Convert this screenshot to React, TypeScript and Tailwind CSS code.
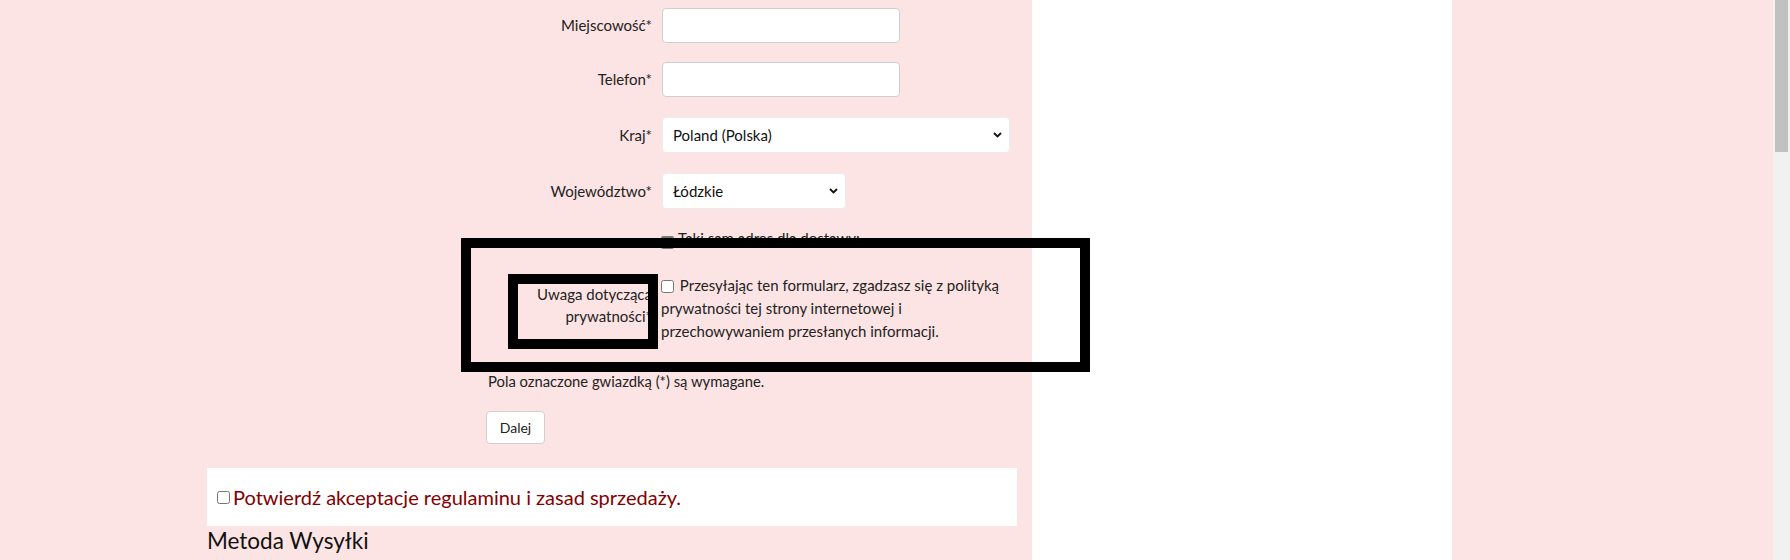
import React from "react";

function Row({ label, children, className }: { label: string; children: React.ReactNode; className: string }) {
  return (
    <div className={"flex items-center " + className}>
      <label className="w-[164px] shrink-0 text-right text-[15px] text-[#222]">{label}</label>
      <div className="ml-[10px] flex-1">{children}</div>
    </div>
  );
}

function Chevron() {
  return (
    <svg className="pointer-events-none absolute right-[8px] top-1/2 -translate-y-1/2" width="9" height="6" viewBox="0 0 9 6">
      <polyline points="1,1 4.5,4.5 8,1" fill="none" stroke="#111" strokeWidth="1.8" />
    </svg>
  );
}

export default function App() {
  return (
    <div className="flex h-[560px] w-[1790px] overflow-hidden font-['Lato',sans-serif] text-[#222]">
      <div className="relative w-[1032px] shrink-0 bg-[#fde4e4]">
        <div className="ml-[207px] w-[810px] pt-[8px]">
          <div className="ml-[281px]">
            <Row label="Miejscowość*" className="h-[35px]">
              <input className="h-[35px] w-[238px] rounded-[4px] border border-[#cfcfcf] bg-white" />
            </Row>
            <Row label="Telefon*" className="mt-[19px] h-[35px]">
              <input className="h-[35px] w-[238px] rounded-[4px] border border-[#cfcfcf] bg-white" />
            </Row>
            <Row label="Kraj*" className="mt-[20px] h-[36px]">
              <div className="relative w-[348px]">
                <select className="h-[36px] w-full appearance-none rounded-[4px] border border-[#ececec] bg-white pl-[10px] text-[15px] text-[#111] outline-none" defaultValue="pl">
                  <option value="pl">Poland (Polska)</option>
                </select>
                <Chevron />
              </div>
            </Row>
            <Row label="Województwo*" className="mt-[20px] h-[36px]">
              <div className="relative w-[184px]">
                <select className="h-[36px] w-full appearance-none rounded-[4px] border border-[#ececec] bg-white pl-[10px] text-[15px] text-[#111] outline-none" defaultValue="ld">
                  <option value="ld">Łódzkie</option>
                </select>
                <Chevron />
              </div>
            </Row>
            <div className="mt-[18px] flex text-[15px] leading-[22.5px]">
              <div className="w-[164px] shrink-0" />
              <div className="ml-[9px] flex-1">
                <span className="mr-[4px] inline-flex h-[13px] w-[13px] translate-y-[2px] items-center justify-center rounded-[2px] bg-[#7a7a7a] align-baseline">
                  <svg width="9" height="8" viewBox="0 0 9 8">
                    <polyline points="1,4 3.5,6.5 8,1" fill="none" stroke="#fff" strokeWidth="1.8" />
                  </svg>
                </span>
                Taki sam adres dla dostawy:
              </div>
            </div>
            <div className="mt-[24px] flex">
              <label className="w-[164px] shrink-0 pt-[9px] text-right text-[15px] leading-[22px] text-[#222]">
                Uwaga dotycząca prywatności*
              </label>
              <div className="ml-[9px] w-[356px] text-[15px] leading-[23px] text-[#222]">
                <input type="checkbox" className="m-0 mr-[2px] h-[13px] w-[13px] align-[-2px]" /> Przesyłając ten formularz, zgadzasz się z polityką prywatności tej strony internetowej i przechowywaniem przesłanych informacji.
              </div>
            </div>
            <p className="mt-[28px] text-[14.8px] leading-[20px] text-[#222]">Pola oznaczone gwiazdką (*) są wymagane.</p>
            <button className="ml-[-2px] mt-[20px] h-[33px] w-[59px] rounded-[4px] border border-[#d0d0d0] bg-white text-[14px] text-[#222]">
              Dalej
            </button>
          </div>
          <div className="mt-[24px] flex h-[58px] items-center bg-white pl-[10px]">
            <input type="checkbox" className="m-0 h-[13px] w-[13px] translate-y-[1px]" />
            <span className="ml-[3px] text-[20px] text-[#850000]">Potwierdź akceptacje regulaminu i zasad sprzedaży.</span>
          </div>
          <h2 className="mt-[2px] text-[22.5px] leading-[26px] text-[#111]">Metoda Wysyłki</h2>
        </div>
        <div className="pointer-events-none absolute left-[461px] top-[238px] h-[134px] w-[629px] border-[10px] border-black" />
        <div className="pointer-events-none absolute left-[508px] top-[274px] h-[75px] w-[150px] border-[10px] border-black" />
      </div>
      <div className="w-[420px] shrink-0 bg-white" />
      <div className="flex-1 bg-[#fde4e4]" />
      <div className="w-[17px] shrink-0 bg-[#f1f1f1]">
        <div className="ml-[2px] h-[152px] w-[13px] bg-[#c1c1c1]" />
      </div>
    </div>
  );
}
